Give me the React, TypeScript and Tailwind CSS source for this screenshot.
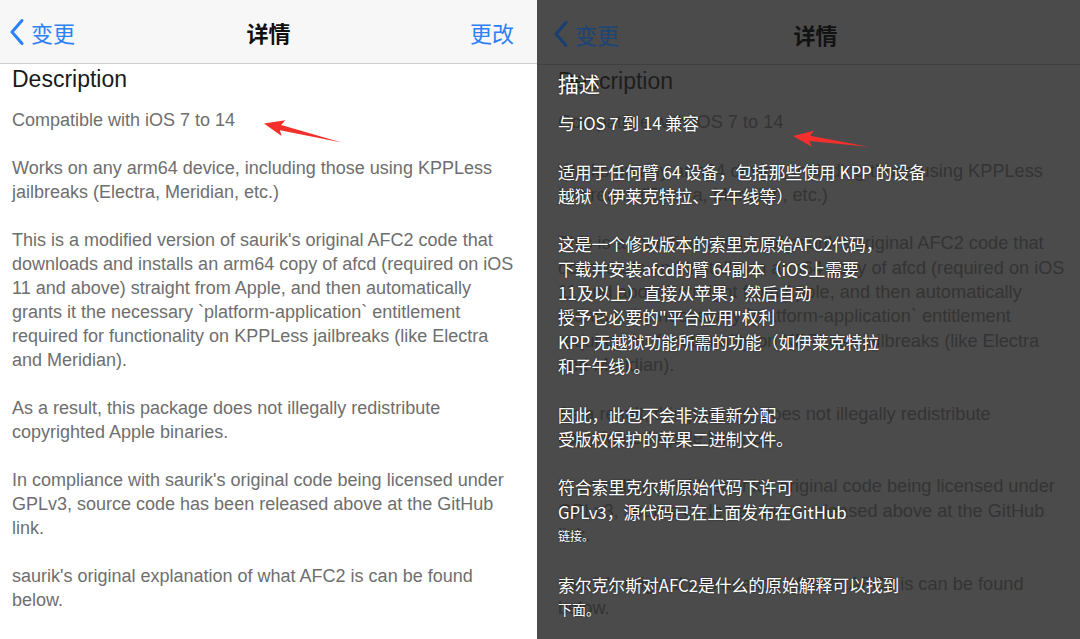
import React from "react";

const leftParas: string[][] = [
  ["Compatible with iOS 7 to 14"],
  ["Works on any arm64 device, including those using KPPLess", "jailbreaks (Electra, Meridian, etc.)"],
  [
    "This is a modified version of saurik's original AFC2 code that",
    "downloads and installs an arm64 copy of afcd (required on iOS",
    "11 and above) straight from Apple, and then automatically",
    "grants it the necessary `platform-application` entitlement",
    "required for functionality on KPPLess jailbreaks (like Electra",
    "and Meridian).",
  ],
  ["As a result, this package does not illegally redistribute", "copyrighted Apple binaries."],
  [
    "In compliance with saurik's original code being licensed under",
    "GPLv3, source code has been released above at the GitHub",
    "link.",
  ],
  ["saurik's original explanation of what AFC2 is can be found", "below."],
];

type ZhLine = { t: string; s?: "sm" | "xs" };
const zhParas: ZhLine[][] = [
  [{ t: "与 iOS 7 到 14 兼容" }],
  [{ t: "适用于任何臂 64 设备，包括那些使用 KPP 的设备" }, { t: "越狱（伊莱克特拉、子午线等）" }],
  [
    { t: "这是一个修改版本的索里克原始AFC2代码，" },
    { t: "下载并安装afcd的臂 64副本（iOS上需要" },
    { t: "11及以上）直接从苹果，然后自动" },
    { t: "授予它必要的\"平台应用\"权利" },
    { t: "KPP 无越狱功能所需的功能（如伊莱克特拉" },
    { t: "和子午线）。" },
  ],
  [{ t: "因此，此包不会非法重新分配" }, { t: "受版权保护的苹果二进制文件。" }],
  [{ t: "符合索里克尔斯原始代码下许可" }, { t: "GPLv3，源代码已在上面发布在GitHub" }, { t: "链接。", s: "xs" }],
  [{ t: "索尔克尔斯对AFC2是什么的原始解释可以找到" }, { t: "下面。", s: "sm" }],
];

function Chevron({ color }: { color: string }) {
  return (
    <svg width="16" height="28" viewBox="0 0 16 28" fill="none">
      <path d="M13 2.5 L3 14 L13 25.5" stroke={color} strokeWidth="3" strokeLinecap="round" strokeLinejoin="round" />
    </svg>
  );
}

function Arrow({ x, y, angle, len }: { x: number; y: number; angle: number; len: number }) {
  return (
    <g transform={`translate(${x} ${y}) rotate(${angle})`}>
      <polygon points={`0,0 20,-8 17,-2.6 ${len},0.6 17,2.8 20,8.2`} fill="#f5302c" />
    </g>
  );
}

export default function App() {
  return (
    <div className="relative flex w-[1080px] h-[639px] overflow-hidden font-['Liberation_Sans','Noto_Sans_CJK_SC',sans-serif]">
      {/* Left: original screen */}
      <div className="w-[537px] h-full bg-white flex flex-col shrink-0">
        <div className="h-[64px] shrink-0 bg-[#f7f7f8] border-b border-[#cfcfd2] grid grid-cols-[1fr_auto_1fr] items-center pt-[1px]">
          <div className="flex items-center pl-[9px] gap-[6px] text-[#2c80f8]">
            <Chevron color="#2c80f8" />
            <span className="text-[22px] font-['Noto_Sans_CJK_SC',sans-serif] leading-none">变更</span>
          </div>
          <div className="text-[22px] font-['Noto_Sans_CJK_SC',sans-serif] font-semibold text-[#111] leading-none">详情</div>
          <div className="flex justify-end pr-[23px] text-[22px] font-['Noto_Sans_CJK_SC',sans-serif] text-[#2c80f8] leading-none">更改</div>
        </div>
        <div className="pl-[12px] pt-[1px]">
          <div className="text-[23px] leading-[28px] text-[#1a1a1a]">Description</div>
          <div className="mt-[15px] flex flex-col gap-[24px] text-[18px] leading-[24px] text-[#6e6e6e]">
            {leftParas.map((p, i) => (
              <div key={i}>
                {p.map((l, j) => (
                  <div key={j} className="whitespace-pre">{l}</div>
                ))}
              </div>
            ))}
          </div>
        </div>
      </div>

      {/* Right: dimmed screen with translation */}
      <div className="relative flex-1 h-full bg-[#4b4b4b] flex flex-col">
        <div className="h-[65px] shrink-0 border-b border-[#3f3f3f] grid grid-cols-[1fr_auto_1fr] items-center pt-[3px] pl-[14px]">
          <div className="flex items-center pl-[2px] gap-[6px]">
            <Chevron color="#173f73" />
            <span className="text-[22px] font-['Noto_Sans_CJK_SC',sans-serif] leading-none text-[#1b4479]">变更</span>
          </div>
          <div className="text-[22px] font-['Noto_Sans_CJK_SC',sans-serif] font-semibold text-[#121212] leading-none">详情</div>
          <div />
        </div>
        <div className="relative flex-1">
          {/* underlying english */}
          <div className="pl-[21px] pt-[2px]">
            <div className="text-[23px] leading-[28px] text-[#1e1e1e]">Description</div>
            <div className="mt-[15px] flex flex-col gap-[24.3px] text-[18.2px] leading-[24.3px] text-[#343434]">
              {leftParas.map((p, i) => (
                <div key={i}>
                  {p.map((l, j) => (
                    <div key={j} className="whitespace-pre">{l}</div>
                  ))}
                </div>
              ))}
            </div>
          </div>
          {/* chinese overlay */}
          <div className="absolute inset-0 pl-[21px] pt-[4px] text-white font-['Noto_Sans_CJK_SC',sans-serif] [text-shadow:0_0_2px_rgba(0,0,0,0.55)]">
            <div className="text-[21px] leading-[28px]">描述</div>
            <div className="mt-[14px] flex flex-col gap-[24.3px] text-[16.8px] leading-[24.3px]">
              {zhParas.map((p, i) => (
                <div key={i}>
                  {p.map((l, j) => (
                    <div
                      key={j}
                      className={
                        l.s === "xs"
                          ? "whitespace-pre text-[12px]"
                          : l.s === "sm"
                          ? "whitespace-pre text-[14px]"
                          : "whitespace-pre"
                      }
                    >
                      {l.t}
                    </div>
                  ))}
                </div>
              ))}
            </div>
          </div>
        </div>
      </div>

      {/* annotation arrows */}
      <svg className="absolute inset-0 pointer-events-none" width="1080" height="639" viewBox="0 0 1080 639">
        <Arrow x={264} y={123.5} angle={13.3} len={80} />
        <Arrow x={793} y={136} angle={7.6} len={76} />
      </svg>
    </div>
  );
}
